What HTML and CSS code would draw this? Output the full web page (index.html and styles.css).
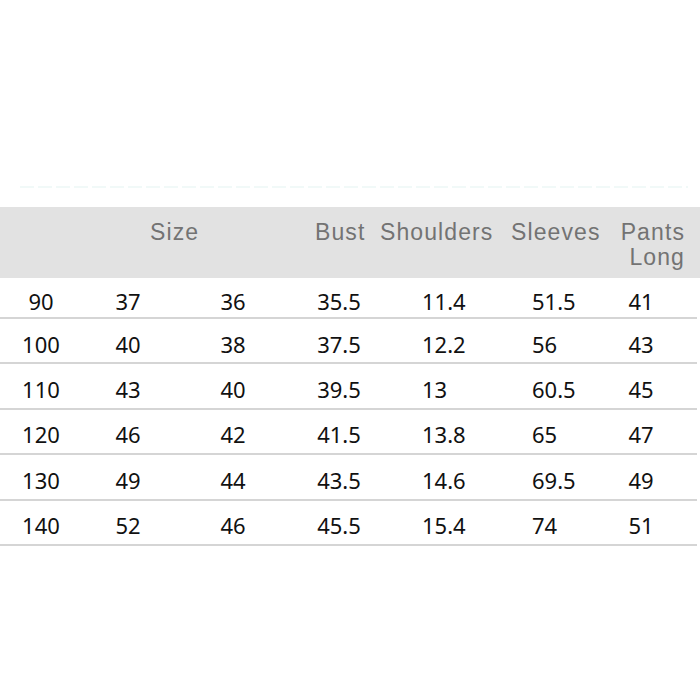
FILE: index.html
```html
<!DOCTYPE html>
<html>
<head>
<meta charset="utf-8">
<link rel="stylesheet" href="styles.css">
</head>
<body>
<div class="chart">
  <div class="faint"></div>
  <div class="head">
    <div class="h h-size">Size</div>
    <div class="h h-bust">Bust</div>
    <div class="h h-sh">Shoulders</div>
    <div class="h h-sl">Sleeves</div>
    <div class="h h-pants">Pants<br>Long</div>
  </div>
  <div class="rows">
    <div class="row first"><span>90</span><span>37</span><span>36</span><span>35.5</span><span>11.4</span><span>51.5</span><span>41</span></div>
    <div class="row"><span>100</span><span>40</span><span>38</span><span>37.5</span><span>12.2</span><span>56</span><span>43</span></div>
    <div class="row"><span>110</span><span>43</span><span>40</span><span>39.5</span><span>13</span><span>60.5</span><span>45</span></div>
    <div class="row"><span>120</span><span>46</span><span>42</span><span>41.5</span><span>13.8</span><span>65</span><span>47</span></div>
    <div class="row"><span>130</span><span>49</span><span>44</span><span>43.5</span><span>14.6</span><span>69.5</span><span>49</span></div>
    <div class="row"><span>140</span><span>52</span><span>46</span><span>45.5</span><span>15.4</span><span>74</span><span>51</span></div>
  </div>
</div>
</body>
</html>
```

FILE: styles.css
```css
html, body {
  margin: 0;
  padding: 0;
  background: #ffffff;
}

.chart {
  width: 700px;
  padding-top: 186px;
}

.faint {
  height: 2px;
  margin: 0 12px 19px 20px;
  background: repeating-linear-gradient(90deg, #f1f9f8 0 14px, #ffffff 14px 18px);
}

.head {
  height: 71px;
  background: #e2e2e2;
  display: grid;
  grid-template-columns: 150px 165px 65px 131px 109px 80px;
  font-family: "Liberation Sans", Arial, sans-serif;
  font-size: 23px;
  line-height: 25px;
  letter-spacing: 1.1px;
  color: #737373;
  box-sizing: border-box;
  padding-top: 13px;
}

.h-size { grid-column: 2; }
.h-bust { grid-column: 3; }
.h-sh { grid-column: 4; }
.h-sl { grid-column: 5; }
.h-pants {
  grid-column: 6;
  text-align: right;
  padding-right: 15px;
}

.rows {
  width: 697px;
}

.row {
  display: grid;
  grid-template-columns: 82px 92px 118px 94px 124px 90px 82px;
  height: 45.4px;
  box-sizing: border-box;
  border-bottom: 2px solid #d5d5d5;
  align-items: center;
  padding-top: 6px;
  font-family: "Noto Sans", "Open Sans", sans-serif;
  font-size: 22px;
  line-height: 24px;
  color: #111111;
}

.row.first {
  height: 41px;
  padding-top: 7px;
}

.row span {
  text-align: center;
}

.row span:nth-child(5) {
  text-align: left;
  padding-left: 36px;
}

.row span:nth-child(6) {
  text-align: left;
  padding-left: 22px;
}
```
